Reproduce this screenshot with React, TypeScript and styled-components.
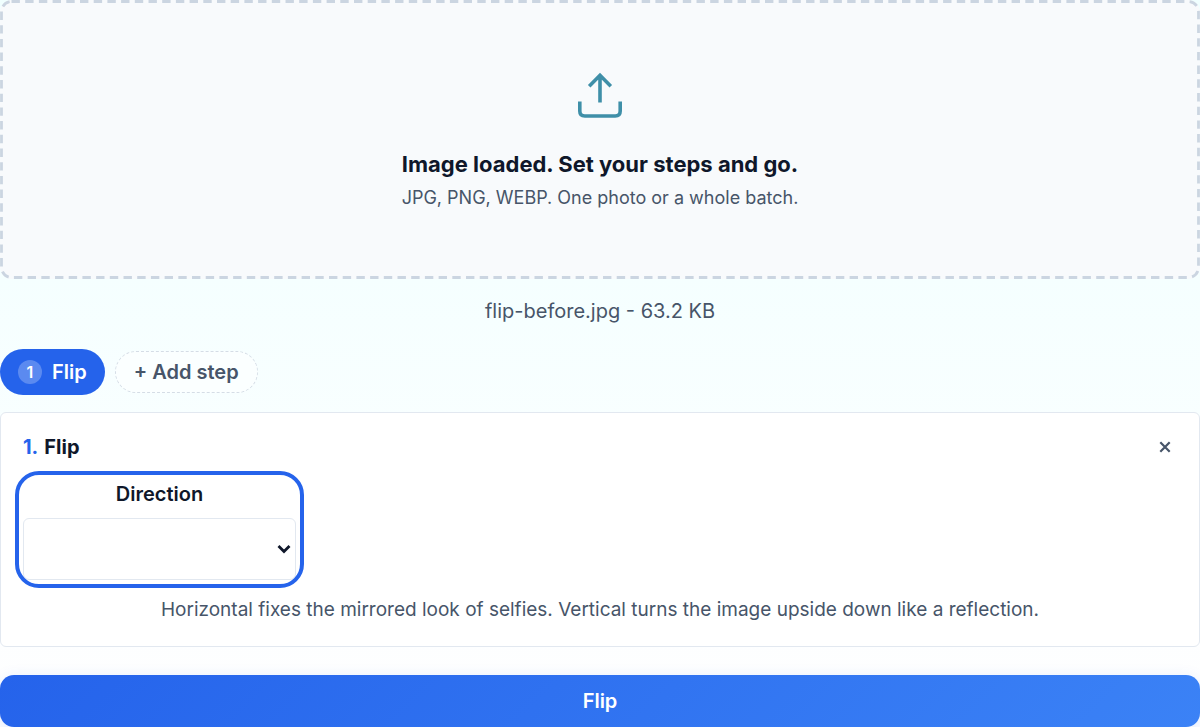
import React, { useState } from "react";
import styled, { createGlobalStyle } from "styled-components";

const GlobalStyle = createGlobalStyle`
  * { box-sizing: border-box; }
  body {
    margin: 0;
    min-height: 100vh;
    background: linear-gradient(180deg, #f0ffff 0%, #f5ffff 38%, #fdfeff 88%, #ffffff 100%);
    color: #0f172a;
    font-family: Inter, "Open Sans", sans-serif;
    font-size: 18px;
    line-height: 24px;
  }
  button, select { font: inherit; color: inherit; }
  p, h2, h3 { margin: 0; }
`;

const Page = styled.main`
  display: flex;
  flex-direction: column;
`;

const DropZone = styled.section`
  position: relative;
  display: flex;
  flex-direction: column;
  align-items: center;
  padding: 71px 24px 65px;
  border-radius: 12px;
  background: #f8fafc;
  text-align: center;
`;

const DashedEdge = styled.svg`
  position: absolute;
  inset: 0;
  width: 100%;
  height: 100%;
  fill: none;
  stroke: #cbd5e1;
  stroke-width: 2.8;
  stroke-dasharray: 8.4 5.3;
  pointer-events: none;

  rect {
    width: calc(100% - 3px);
    height: calc(100% - 3px);
  }
`;

const UploadIcon = styled.svg`
  width: 48px;
  height: 48px;
  margin-bottom: 29px;
  fill: none;
  stroke: #3f8fa8;
  stroke-width: 3.6;
`;

const Title = styled.h2`
  margin-bottom: 2px;
  font-size: 22px;
  line-height: 32px;
  font-weight: 700;
`;

const Formats = styled.p`
  line-height: 32px;
  color: #475569;
`;

const FileInfo = styled.p`
  margin: 20px 0 26px;
  font-size: 20px;
  text-align: center;
  color: #475569;
`;

const Steps = styled.nav`
  display: flex;
  align-items: center;
  gap: 10px;
  margin-bottom: 17px;
`;

const StepChip = styled.button`
  display: flex;
  align-items: center;
  gap: 10px;
  height: 46px;
  padding: 0 18px;
  border: 0;
  border-radius: 24px;
  background: #2563eb;
  color: #fff;
  font-size: 20px;
  font-weight: 600;
`;

const StepNumber = styled.span`
  width: 24px;
  height: 24px;
  border-radius: 50%;
  background: rgba(255, 255, 255, 0.25);
  font-size: 16px;
  text-align: center;
`;

const AddStep = styled.button`
  height: 42px;
  padding: 0 18px;
  border: 1px dashed #d5dde6;
  border-radius: 24px;
  background: #fbffff;
  color: #475569;
  font-size: 20px;
  font-weight: 600;
`;

const Card = styled.section`
  padding: 22px;
  border: 1px solid #e2e8f0;
  border-radius: 6px;
  background: #fff;
`;

const CardHeader = styled.header`
  display: flex;
  align-items: center;
  justify-content: space-between;
  margin-bottom: 20px;
`;

const CardTitle = styled.h3`
  font-size: 20px;
  font-weight: 700;
`;

const Index = styled.span`
  margin-right: 6px;
  color: #2563eb;
`;

const RemoveButton = styled.button`
  display: flex;
  align-items: center;
  justify-content: center;
  width: 24px;
  height: 24px;
  padding: 0;
  border: 0;
  background: none;
`;

const RemoveIcon = styled.svg`
  width: 12px;
  height: 12px;
  fill: none;
  stroke: #475569;
  stroke-width: 2.2;
`;

const Field = styled.div`
  display: flex;
  flex-direction: column;
  width: 273px;
  max-width: 100%;
  margin-bottom: 16px;
  border-radius: 16px;
  outline: 4px solid #2563eb;
  outline-offset: 4px;
`;

const Label = styled.label`
  padding: 3px 0 12px;
  font-size: 20px;
  font-weight: 600;
  text-align: center;
`;

const SelectBox = styled.div`
  display: grid;
  align-items: center;
  > * { grid-area: 1 / 1; }
`;

const Select = styled.select`
  width: 100%;
  height: 62px;
  padding: 0 36px 0 16px;
  border: 1px solid #e2e8f0;
  border-radius: 6px;
  background: #fff;
  appearance: none;
  option { color: #0f172a; }
`;

const Chevron = styled.svg`
  justify-self: end;
  width: 14px;
  height: 10px;
  margin-right: 5px;
  fill: none;
  stroke: #0f172a;
  stroke-width: 2.8;
  pointer-events: none;
`;

const Hint = styled.p`
  font-size: 19px;
  line-height: 28px;
  text-align: center;
  color: #475569;
`;

const Submit = styled.button`
  height: 52px;
  margin-top: 28px;
  border: 0;
  border-radius: 14px;
  background: linear-gradient(135deg, #2563eb, #3b82f6);
  box-shadow: 0 4px 16px rgba(37, 99, 235, 0.15);
  color: #fff;
  font-size: 20px;
  font-weight: 600;
`;

export default function App() {
  const [direction, setDirection] = useState("");
  return (
    <>
      <GlobalStyle />
      <Page>
        <DropZone>
          <DashedEdge aria-hidden="true">
            <rect x="1.5" y="1.5" rx="10" />
          </DashedEdge>
          <UploadIcon viewBox="0 0 48 48" aria-hidden="true">
            <path d="M24 31.5V4M13.2 15.3 24 4.3 34.8 15.3" />
            <path d="M3.8 30.5V40Q3.8 45 8.8 45H39.2Q44.2 45 44.2 40V30.5" />
          </UploadIcon>
          <Title>Image loaded. Set your steps and go.</Title>
          <Formats>JPG, PNG, WEBP. One photo or a whole batch.</Formats>
        </DropZone>
        <FileInfo>flip-before.jpg - 63.2 KB</FileInfo>
        <Steps aria-label="Steps">
          <StepChip type="button">
            <StepNumber>1</StepNumber>
            Flip
          </StepChip>
          <AddStep type="button">+ Add step</AddStep>
        </Steps>
        <Card>
          <CardHeader>
            <CardTitle>
              <Index>1.</Index>Flip
            </CardTitle>
            <RemoveButton type="button" aria-label="Remove step">
              <RemoveIcon viewBox="0 0 12 12">
                <path d="M1.3 1.3 10.7 10.7M10.7 1.3 1.3 10.7" />
              </RemoveIcon>
            </RemoveButton>
          </CardHeader>
          <Field>
            <Label htmlFor="direction">Direction</Label>
            <SelectBox>
              <Select
                id="direction"
                value={direction}
                onChange={(event) => setDirection(event.target.value)}
              >
                <option value="" />
              </Select>
              <Chevron viewBox="0 0 14 10" aria-hidden="true">
                <path d="M1.5 2 7 7.5 12.5 2" />
              </Chevron>
            </SelectBox>
          </Field>
          <Hint>
            Horizontal fixes the mirrored look of selfies. Vertical turns the image upside down like
            a reflection.
          </Hint>
        </Card>
        <Submit type="button">Flip</Submit>
      </Page>
    </>
  );
}
